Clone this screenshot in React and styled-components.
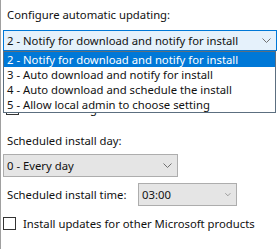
import React from 'react'
import styled, { createGlobalStyle } from 'styled-components'

const GlobalStyle = createGlobalStyle`
  html, body {
    margin: 0;
    padding: 0;
    background: #ffffff;
  }
  * {
    box-sizing: border-box;
  }
`

const updateOptions = [
  '2 - Notify for download and notify for install',
  '3 - Auto download and notify for install',
  '4 - Auto download and schedule the install',
  '5 - Allow local admin to choose setting',
]

const Chevron = () => (
  <svg width='9' height='5' viewBox='0 0 9 5' fill='none'>
    <path d='M0.5 0.5 L4.5 4.5 L8.5 0.5' stroke='#707070' strokeWidth='1' />
  </svg>
)

const App = () => {
  return (
    <Panel>
      <GlobalStyle />
      <Label>Configure automatic updating:</Label>

      <DropWrap>
        <Combo $focused>
          <ComboText>{updateOptions[0]}</ComboText>
          <Chevron />
        </Combo>
        <List>
          {updateOptions.map((opt, i) => (
            <Option key={opt} $selected={i === 0}>
              {opt}
            </Option>
          ))}
        </List>
      </DropWrap>

      {/* partly hidden under the open list */}
      <CheckRow $top={50} $left={3}>
        <Box />
        <span>Install during automatic maintenance</span>
      </CheckRow>

      <Label $top={17}>Scheduled install day:</Label>
      <Combo $width={175} $top={6}>
        <ComboText>0 - Every day</ComboText>
        <Chevron />
      </Combo>

      <TimeRow>
        <span>Scheduled install time:</span>
        <Combo $width={99}>
          <ComboText>03:00</ComboText>
          <Chevron />
        </Combo>
      </TimeRow>

      <CheckRow $top={10} $left={0}>
        <Box />
        <span>Install updates for other Microsoft products</span>
      </CheckRow>
    </Panel>
  )
}

export default App

// Styled components
const Panel = styled.div`
  width: 279px;
  height: 249px;
  overflow: hidden;
  border-left: 1px solid #a0a0a0;
  padding: 7px 0 0 2px;
  display: flex;
  flex-direction: column;
  font-family: 'Noto Sans', 'Open Sans', sans-serif;
  font-size: 11.3px;
  color: #111111;
  line-height: 15px;
`

const Label = styled.div`
  padding-left: 4px;
  margin-top: ${(p) => p.$top || 0}px;
`

const DropWrap = styled.div`
  position: relative;
  margin-top: 8px;
  width: 274px;
`

const Combo = styled.div`
  display: flex;
  align-items: center;
  justify-content: space-between;
  width: ${(p) => p.$width || 274}px;
  height: ${(p) => (p.$focused ? 21 : 23)}px;
  margin-top: ${(p) => p.$top || 0}px;
  padding: 0 5px 0 3px;
  border: 1px solid ${(p) => (p.$focused ? '#0078d7' : '#adadad')};
  background: ${(p) => (p.$focused ? '#e5f1fb' : '#e5e5e5')};
`

const ComboText = styled.span`
  white-space: nowrap;
`

const List = styled.div`
  position: absolute;
  top: 100%;
  left: 0;
  width: 273px;
  border: 1px solid #5c6f80;
  background: #ffffff;
  z-index: 2;
`

const Option = styled.div`
  height: 15px;
  padding-left: 3px;
  white-space: nowrap;
  background: ${(p) => (p.$selected ? '#0078d7' : 'transparent')};
  color: ${(p) => (p.$selected ? '#ffffff' : '#111111')};
`

const CheckRow = styled.label`
  display: flex;
  align-items: center;
  gap: 7px;
  margin-top: ${(p) => p.$top || 0}px;
  padding-left: ${(p) => p.$left || 0}px;
  white-space: nowrap;
`

const Box = styled.span`
  width: 13px;
  height: 13px;
  border: 1px solid #333333;
  background: #ffffff;
  flex-shrink: 0;
`

const TimeRow = styled.div`
  display: flex;
  align-items: center;
  margin-top: 6px;
  padding-left: 4px;

  span:first-child {
    width: 131px;
  }
`
